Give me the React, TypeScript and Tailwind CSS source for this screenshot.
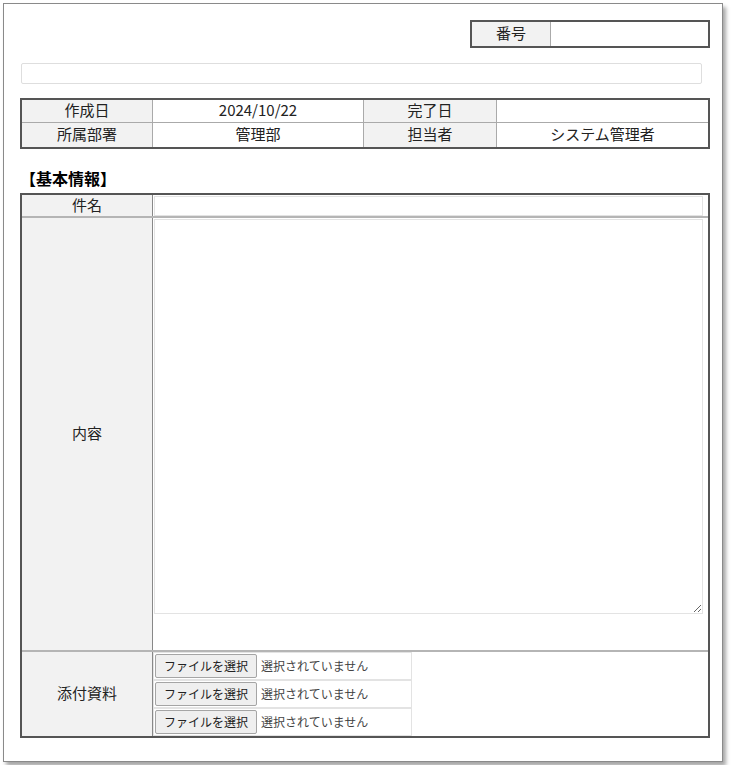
import React from "react";

const lab = "bg-[#f2f2f2] flex items-center justify-center pb-[3px]";
const val = "flex items-center justify-center pb-[3px]";

function FileRow() {
  return (
    <div className="flex items-center h-[28px] w-[259px] border border-[#e3e3e3] pl-[1px]">
      <button
        type="button"
        className="h-[24px] w-[102px] shrink-0 rounded-[2px] border border-[#a5a5a5] bg-[#efefef] text-[12px] leading-none text-[#222] pb-[1px]"
      >
        ファイルを選択
      </button>
      <span className="ml-[4px] text-[12px] text-[#444] whitespace-nowrap pb-[1px]">選択されていません</span>
    </div>
  );
}

export default function App() {
  return (
    <div className="p-[3px] bg-white font-['Meiryo','Noto_Sans_CJK_JP',sans-serif] text-[15px] leading-none text-[#222]">
      <div className="w-[720px] h-[759px] border border-[#8a8a8a] bg-white shadow-[3px_4px_4px_rgba(0,0,0,0.35)] pt-4 pl-4 pr-3">
        {/* 番号 */}
        <div className="flex justify-end">
          <div className="flex w-[240px] h-[28px] border-2 border-[#555]">
            <div className={`w-[79px] border-r border-[#aaa] ${lab}`}>番号</div>
            <div className="flex-1 bg-white" />
          </div>
        </div>

        {/* empty bar */}
        <div className="mt-[15px] ml-[1px] w-[681px] h-[21px] border border-[#dedede] rounded-[2px] bg-white" />

        {/* info table */}
        <div className="mt-[14px] w-[690px] border-2 border-[#555]">
          <div className="flex h-[23px] border-b border-[#aaa]">
            <div className={`w-[131px] border-r border-[#aaa] ${lab}`}>作成日</div>
            <div className={`w-[211px] border-r border-[#aaa] ${val}`}>2024/10/22</div>
            <div className={`w-[133px] border-r border-[#aaa] ${lab}`}>完了日</div>
            <div className="flex-1" />
          </div>
          <div className="flex h-[24px]">
            <div className={`w-[131px] border-r border-[#aaa] ${lab}`}>所属部署</div>
            <div className={`w-[211px] border-r border-[#aaa] ${val}`}>管理部</div>
            <div className={`w-[133px] border-r border-[#aaa] ${lab}`}>担当者</div>
            <div className={`flex-1 ${val}`}>システム管理者</div>
          </div>
        </div>

        {/* heading */}
        <div className="mt-[22px] h-[22px] text-[16px] font-bold leading-[14px] text-black">【基本情報】</div>

        {/* main table */}
        <div className="w-[690px] border-2 border-[#555]">
          <div className="flex h-[23px] border-b-2 border-[#b5b5b5]">
            <div className={`w-[131px] border-r border-[#888] ${lab}`}>件名</div>
            <div className="flex-1 pl-[1px] pr-[5px] pt-[1px]">
              <input type="text" className="block w-[549px] h-[20px] border border-[#e3e3e3] outline-none" />
            </div>
          </div>
          <div className="flex h-[434px] border-b-2 border-[#b5b5b5]">
            <div className={`w-[131px] border-r border-[#888] ${lab}`}>内容</div>
            <div className="flex-1 pl-[1px] pt-[1px]">
              <textarea className="block w-[549px] h-[395px] border border-[#e3e3e3] outline-none" />
            </div>
          </div>
          <div className="flex h-[84px]">
            <div className={`w-[131px] border-r border-[#888] ${lab}`}>添付資料</div>
            <div className="flex-1 flex flex-col">
              <FileRow />
              <FileRow />
              <FileRow />
            </div>
          </div>
        </div>
      </div>
    </div>
  );
}
